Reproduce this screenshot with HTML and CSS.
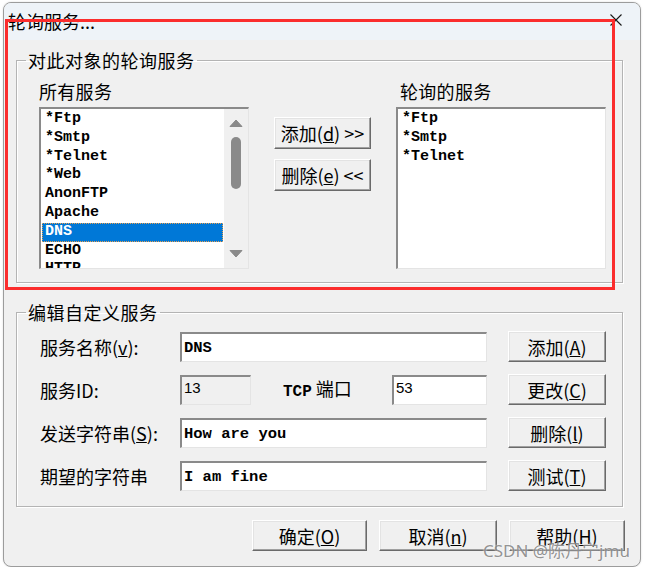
FILE: index.html
```html
<!DOCTYPE html>
<html lang="zh-CN">
<head>
<meta charset="utf-8">
<title>轮询服务...</title>
<link rel="stylesheet" href="styles.css">
</head>
<body>
<div class="window">
  <div class="titlebar">
    <span class="title">轮询服务...</span>
    <svg class="close" width="12" height="12" viewBox="0 0 12 12"><path d="M0.5 0.5L11.5 11.5M11.5 0.5L0.5 11.5" stroke="#1a1a1a" stroke-width="1.1" fill="none"/></svg>
  </div>
  <div class="content">
    <fieldset class="group">
      <legend>对此对象的轮询服务</legend>
      <div class="g1-body">
        <div class="col">
          <div class="col-label">所有服务</div>
          <div class="listbox">
            <ul class="items">
              <li>*Ftp</li>
              <li>*Smtp</li>
              <li>*Telnet</li>
              <li>*Web</li>
              <li>AnonFTP</li>
              <li>Apache</li>
              <li class="sel">DNS</li>
              <li>ECHO</li>
              <li>HTTP</li>
            </ul>
            <div class="vscroll">
              <div class="arrow"><svg width="14" height="8" viewBox="0 0 14 8"><path d="M1 7.5 L7 1 L13 7.5 Z" fill="#8a8a8a" stroke="#8a8a8a" stroke-linejoin="round"/></svg></div>
              <div class="thumb"></div>
              <div class="spacer"></div>
              <div class="arrow"><svg width="14" height="8" viewBox="0 0 14 8"><path d="M1 0.5 L7 7 L13 0.5 Z" fill="#8a8a8a" stroke="#8a8a8a" stroke-linejoin="round"/></svg></div>
            </div>
          </div>
        </div>
        <div class="mid">
          <button class="btn">添加(<u>d</u>) &gt;&gt;</button>
          <button class="btn">删除(<u>e</u>) &lt;&lt;</button>
        </div>
        <div class="col">
          <div class="col-label right">轮询的服务</div>
          <div class="listbox">
            <ul class="items">
              <li>*Ftp</li>
              <li>*Smtp</li>
              <li>*Telnet</li>
            </ul>
          </div>
        </div>
      </div>
    </fieldset>

    <fieldset class="group g2">
      <legend>编辑自定义服务</legend>
      <div class="form">
        <div class="row">
          <span class="label">服务名称(<u>v</u>):</span>
          <div class="field"><div class="edit wide">DNS</div></div>
          <button class="btn side">添加(<u>A</u>)</button>
        </div>
        <div class="row">
          <span class="label">服务ID:</span>
          <div class="field">
            <div class="edit readonly num">13</div>
            <span class="tcp"><span class="mono">TCP</span> 端口</span>
            <div class="edit port num">53</div>
          </div>
          <button class="btn side">更改(<u>C</u>)</button>
        </div>
        <div class="row">
          <span class="label">发送字符串(<u>S</u>):</span>
          <div class="field"><div class="edit wide">How are you</div></div>
          <button class="btn side">删除(<u>l</u>)</button>
        </div>
        <div class="row">
          <span class="label">期望的字符串</span>
          <div class="field"><div class="edit wide">I am fine</div></div>
          <button class="btn side">测试(<u>T</u>)</button>
        </div>
      </div>
    </fieldset>

    <div class="footer">
      <button class="btn ok">确定(<u>O</u>)</button>
      <button class="btn cancel">取消(<u>n</u>)</button>
      <button class="btn help">帮助(<u>H</u>)</button>
    </div>
  </div>
  <div class="redbox"></div>
  <div class="watermark">CSDN @陈丹宁jmu</div>
</div>
</body>
</html>
```

FILE: styles.css
```css
html, body {
  margin: 0;
  background: #ffffff;
}
body {
  padding: 2px 0 0 3px;
  font-family: "Noto Sans CJK SC", "Noto Sans", sans-serif;
  color: #000;
}
.window {
  position: relative;
  box-sizing: border-box;
  width: 638px;
  height: 565px;
  border: 1px solid #9c9c9c;
  border-radius: 8px;
  background: #f0f0f0;
  overflow: hidden;
  box-shadow: 0 0 2px rgba(0,0,0,0.15);
}
.titlebar {
  height: 37px;
  background: #eef3f8;
  display: flex;
  align-items: center;
  justify-content: space-between;
  padding: 0 18px 0 4px;
}
.title {
  font-size: 18px;
  line-height: 20px;
  margin-top: -2px;
}
.close {
  display: block;
  margin-top: -4px;
}
.content {
  padding: 11px 17px 0 12px;
}
.group {
  margin: 0;
  padding: 0;
  min-width: 0;
  border: 1px solid #b4b4b4;
  box-shadow: inset 1px 1px 0 #ffffff, 1px 1px 0 #ffffff;
}
.group legend {
  margin-left: 9px;
  padding: 0 2px;
  font-size: 18px;
  line-height: 18px;
  letter-spacing: 0.5px;
}
.g1-body {
  display: flex;
  padding: 12px 16px 13px 22px;
}
.col {
  width: 210px;
  display: flex;
  flex-direction: column;
}
.col-label {
  font-size: 18px;
  line-height: 20px;
  height: 20px;
  margin-bottom: 6px;
  letter-spacing: 0.3px;
}
.col-label.right {
  padding-left: 4px;
}
.listbox {
  box-sizing: border-box;
  height: 162px;
  background: #fff;
  border-top: 2px solid #8a8a8a;
  border-left: 2px solid #8a8a8a;
  border-right: 1px solid #e4e4e4;
  border-bottom: 1px solid #e4e4e4;
  display: flex;
}
.items {
  flex: 1;
  margin: 0;
  padding: 1px 1px 0 1px;
  list-style: none;
  overflow: hidden;
  font-family: "Liberation Mono", monospace;
  font-weight: bold;
  font-size: 15px;
}
.items li {
  height: 18.8px;
  line-height: 18.8px;
  padding-left: 3px;
  white-space: nowrap;
}
.items li.sel {
  background: #0078d7;
  color: #fff;
  outline: 1px dotted #e8a050;
  outline-offset: -1px;
}
.vscroll {
  width: 24px;
  background: #f0f0f0;
  display: flex;
  flex-direction: column;
  align-items: center;
}
.vscroll .arrow {
  height: 28px;
  display: flex;
  align-items: center;
  justify-content: center;
}
.vscroll .arrow svg { display: block; }
.thumb {
  width: 10px;
  height: 52px;
  border-radius: 5px;
  background: #8a8a8a;
}
.spacer { flex: 1; }
.mid {
  width: 97px;
  margin: 0 25px;
  padding-top: 36px;
  display: flex;
  flex-direction: column;
  gap: 10px;
}
.btn {
  box-sizing: border-box;
  height: 32px;
  padding: 0;
  background: #f0f0f0;
  border: 1px solid;
  border-color: #ffffff #6a6a6a #6a6a6a #ffffff;
  box-shadow: inset -1px -1px 0 #a0a0a0, inset 1px 1px 0 #e3e3e3;
  font-family: "Noto Sans CJK SC", sans-serif;
  font-size: 18px;
  line-height: 20px;
  color: #000;
  white-space: nowrap;
}
.g2 {
  margin-top: 20px;
}
.form {
  padding: 10px 16px 15px 23px;
  display: flex;
  flex-direction: column;
  gap: 12px;
}
.row {
  display: flex;
  align-items: center;
  height: 31px;
}
.label {
  width: 140px;
  font-size: 18px;
  line-height: 20px;
}
.field {
  width: 307px;
  display: flex;
  align-items: center;
}
.edit {
  box-sizing: border-box;
  height: 30px;
  background: #fff;
  border-top: 2px solid #8a8a8a;
  border-left: 2px solid #8a8a8a;
  border-right: 1px solid #e4e4e4;
  border-bottom: 1px solid #e4e4e4;
  padding: 3px 2px 0 2px;
  font-family: "Liberation Mono", monospace;
  font-weight: bold;
  font-size: 15.5px;
  line-height: 22px;
  white-space: pre;
}
.edit.wide { width: 307px; }
.edit.num {
  font-family: "Liberation Sans", sans-serif;
  font-weight: normal;
  font-size: 15px;
  line-height: 18px;
  padding-top: 2px;
}
.edit.readonly {
  width: 71px;
  background: #f0f0f0;
}
.tcp {
  margin-left: 32px;
  font-size: 18px;
  line-height: 20px;
}
.mono {
  font-family: "Liberation Mono", monospace;
  font-weight: bold;
  font-size: 16px;
}
.edit.port {
  width: 95px;
  margin-left: auto;
}
.btn.side {
  width: 98px;
  height: 31px;
  margin-left: 21px;
}
.footer {
  display: flex;
  justify-content: flex-end;
  gap: 12px;
  margin-top: 13px;
  margin-right: -2px;
}
.footer .btn { height: 31px; }
.btn.ok { width: 115px; }
.btn.cancel { width: 118px; }
.btn.help { width: 116px; }
.redbox {
  position: absolute;
  left: 1px;
  top: 16px;
  width: 610px;
  height: 271px;
  box-sizing: border-box;
  border: 3px solid #fb2d2d;
  pointer-events: none;
}
.watermark {
  position: absolute;
  left: 479px;
  top: 538px;
  font-family: "Noto Sans", "Noto Sans CJK SC", sans-serif;
  font-size: 17px;
  line-height: 20px;
  color: rgba(120,120,120,0.8);
  text-shadow: 0 0 2px #ffffff;
  white-space: nowrap;
}
```
